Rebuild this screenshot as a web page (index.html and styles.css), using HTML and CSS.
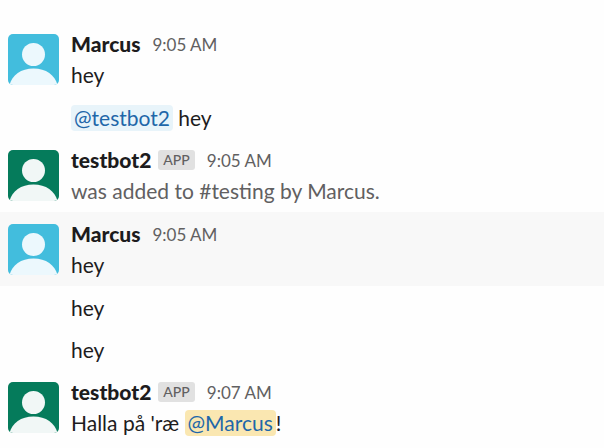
FILE: index.html
```html
<!DOCTYPE html>
<html lang="en">
<head>
<meta charset="utf-8">
<title>Messages</title>
<link rel="stylesheet" href="styles.css">
</head>
<body>
<svg class="symbols" aria-hidden="true">
  <symbol id="person" viewBox="0 0 51 51">
    <circle cx="25.500" cy="20.500" r="11.500"/>
    <path d="M1.500 51C4 41 13 34.500 25.500 34.500S47 41 49.500 51Z"/>
  </symbol>
</svg>
<main class="messages">
  <article class="message">
    <svg class="avatar avatar-blue" role="img" aria-label="Marcus"><use href="#person"/></svg>
    <div class="body">
      <header class="meta"><b class="name">Marcus</b><time class="time">9:05 AM</time></header>
      <p class="text">hey</p>
    </div>
  </article>
  <article class="message follow">
    <p class="text"><a class="mention" href="#testbot2">@testbot2</a> hey</p>
  </article>
  <article class="message">
    <svg class="avatar avatar-green" role="img" aria-label="testbot2"><use href="#person"/></svg>
    <div class="body">
      <header class="meta"><b class="name">testbot2</b><span class="badge">APP</span><time class="time">9:05 AM</time></header>
      <p class="text muted">was added to #testing by Marcus.</p>
    </div>
  </article>
  <article class="message active">
    <svg class="avatar avatar-blue" role="img" aria-label="Marcus"><use href="#person"/></svg>
    <div class="body">
      <header class="meta"><b class="name">Marcus</b><time class="time">9:05 AM</time></header>
      <p class="text">hey</p>
    </div>
  </article>
  <article class="message follow">
    <p class="text">hey</p>
  </article>
  <article class="message follow">
    <p class="text">hey</p>
  </article>
  <article class="message">
    <svg class="avatar avatar-green" role="img" aria-label="testbot2"><use href="#person"/></svg>
    <div class="body">
      <header class="meta"><b class="name">testbot2</b><span class="badge">APP</span><time class="time">9:07 AM</time></header>
      <p class="text">Halla på 'ræ <a class="mention mention-self" href="#marcus">@Marcus</a>!</p>
    </div>
  </article>
</main>
</body>
</html>
```
FILE: styles.css
```css
body {
  margin: 0;
  background: #fefefe;
  color: #1d1c1d;
  font-family: Lato, "Liberation Sans", sans-serif;
  font-size: 21px;
  line-height: 31px;
}

.symbols {
  display: none;
}

.messages {
  padding-top: 22px;
}

.message {
  display: flex;
  gap: 12px;
  padding: 6px 8px;
}

.message.follow {
  padding: 6px 8px 5px 71px;
}

.active {
  background: #f8f8f8;
}

.avatar {
  flex: none;
  width: 51px;
  height: 51px;
  margin-top: 6px;
  border-radius: 5px;
}

.avatar-blue {
  background: #42bddd;
  fill: #ecf8fd;
}

.avatar-green {
  background: #057b5b;
  fill: #f1f7f6;
}

.body {
  flex: 1;
}

.meta {
  display: flex;
  align-items: center;
}

.name {
  font-weight: 900;
}

.time {
  margin-left: 12px;
  padding-top: 2px;
  color: #616061;
  font-size: 17px;
  line-height: 29px;
}

.badge {
  margin-left: 7px;
  padding: 0 5px;
  border-radius: 3px;
  background: #e1e1e1;
  color: #616061;
  font-size: 14px;
  font-weight: 500;
  line-height: 20px;
}

.text {
  margin: 0;
}

.muted {
  color: #616061;
}

.mention {
  padding: 0 3px 1px;
  border-radius: 4px;
  background: #e8f4fa;
  color: #1f67a9;
  text-decoration: none;
}

.mention-self {
  background: #fae7b1;
}
```
